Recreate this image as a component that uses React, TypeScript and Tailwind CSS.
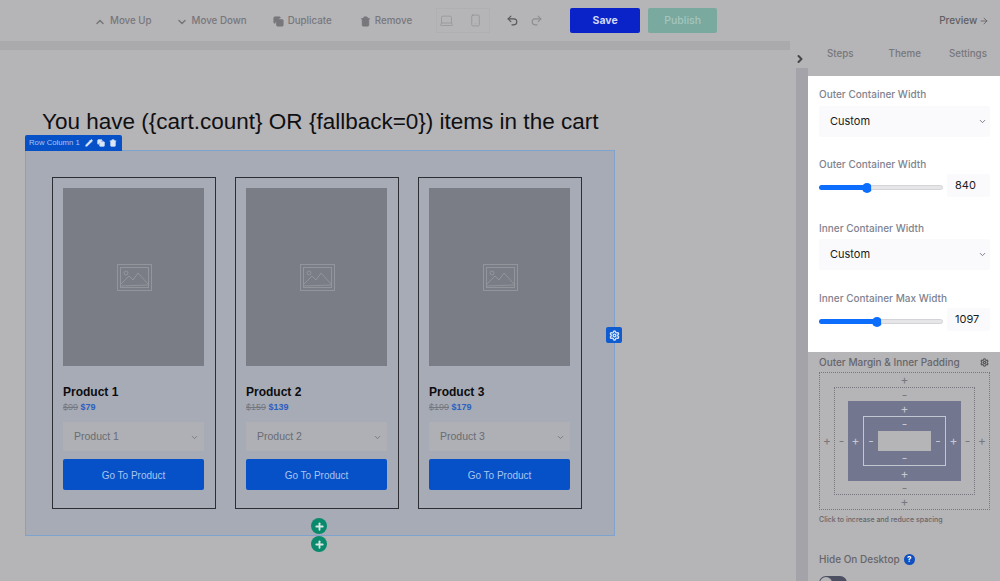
import type { ReactNode } from "react";
import { ArrowRight, ChevronDown, ChevronRight, ChevronUp, Copy, Laptop, Pencil, Plus, Redo2, Settings, Smartphone, Trash2, Undo2 } from "lucide-react";

const products = [
    { name: "Product 1", was: "$99", now: "$79" },
    { name: "Product 2", was: "$159", now: "$139" },
    { name: "Product 3", was: "$199", now: "$179" },
];

const ToolButton = ({ icon, label, className }: { icon: ReactNode; label: string; className: string }) => (
    <div className={`flex items-center gap-[4px] whitespace-nowrap pt-[2px] text-[9.75px] font-medium text-[#77777c] ${className}`}>
        {icon}
        <span>{label}</span>
    </div>
);

const PlaceholderIcon = () => (
    <svg width="35" height="27" viewBox="0 0 35 27" fill="none" stroke="#92959c" strokeWidth="1">
        <rect x="0.5" y="0.5" width="34" height="26" />
        <rect x="3.5" y="3.5" width="28" height="20" />
        <circle cx="9" cy="9" r="2" />
        <path d="M4 20 L12 12 L16 16 L21 9 L31 20" />
        <path d="M4 22 L31 21" />
    </svg>
);

const ProductCard = ({ name, was, now }: { name: string; was: string; now: string }) => (
    <div className="w-[164px] h-[332px] border border-[#2c2e33] pl-[10px] pr-[11px] pt-[10px]">
        <div className="h-[178px] bg-[#7a7d85] flex items-center justify-center pl-[2px]">
            <PlaceholderIcon />
        </div>
        <div className="mt-[19px] text-[12px] leading-[14px] font-bold text-[#0c0c10]">{name}</div>
        <div className="mt-[2px] text-[9px] leading-[12px]">
            <span className="line-through text-[#75787f]">{was}</span>{" "}
            <span className="font-bold text-[#2b5fc0]">{now}</span>
        </div>
        <div className="mt-[9px] h-[29px] bg-[#aeb0b6] flex items-center justify-between pl-[11px] pr-[5px] pt-[1px] text-[10.5px] text-[#6a6c72]">
            <span>{name}</span>
            <ChevronDown size={9} />
        </div>
        <div className="mt-[8px] h-[31px] bg-[#0650c8] rounded-[2px] flex items-center justify-center pt-[1px] text-[10px] text-[#a9c6ef]">
            Go To Product
        </div>
    </div>
);

const FieldLabel = ({ children }: { children: ReactNode }) => (
    <div className="text-[10px] leading-[14px] font-medium text-[#7f838e]">{children}</div>
);

const SelectField = () => (
    <div className="mt-[4px] h-[31px] bg-[#fafafd] rounded-[2px] flex items-center justify-between pl-[11px] pr-[3px] text-[11px] text-[#1b1c20]">
        <span>Custom</span>
        <ChevronDown size={9} className="text-[#555860]" />
    </div>
);

const SliderField = ({ fill, rest, value }: { fill: string; rest: string; value: string }) => (
    <div className="mt-[3px] flex items-center justify-between">
        <div className="flex items-center w-[124px] pt-[4px]">
            <div className={`h-[5px] bg-[#0d6efd] rounded-l-full ${fill}`} />
            <div className="w-[10px] h-[10px] rounded-full bg-[#0d6efd] shrink-0 -mx-[1px]" />
            <div className={`h-[5px] bg-[#e6e6e8] border border-[#d4d4d8] rounded-r-full ${rest}`} />
        </div>
        <div className="w-[43px] h-[23px] bg-[#fafafd] rounded-[2px] flex items-center pl-[8px] text-[11px] text-[#1b1c20]">{value}</div>
    </div>
);

// one ring of the spacing box: sign in the middle of each side
const SpacingRing = ({ sign, className, signClass, children }: { sign: string; className: string; signClass: string; children: ReactNode }) => (
    <div className={`grid text-[12px] leading-none ${className}`}>
        <div className={`col-start-2 flex items-center justify-center ${signClass}`}>{sign}</div>
        <div className={`col-start-1 row-start-2 flex items-center justify-center ${signClass}`}>{sign}</div>
        <div className="col-start-2 row-start-2 min-h-0">{children}</div>
        <div className={`col-start-3 row-start-2 flex items-center justify-center ${signClass}`}>{sign}</div>
        <div className={`col-start-2 row-start-3 flex items-center justify-center ${signClass}`}>{sign}</div>
    </div>
);

export default function App() {
    return (
        <div className="relative w-[1000px] h-[581px] overflow-hidden bg-[#b5b4b6] font-['Inter',sans-serif] flex flex-col">
            {/* Top toolbar */}
            <div className="h-[41px] shrink-0 flex items-center">
                <ToolButton className="ml-[94px]" label="Move Up" icon={<ChevronUp size={12} strokeWidth={3} />} />
                <ToolButton className="ml-[24px]" label="Move Down" icon={<ChevronDown size={12} strokeWidth={3} />} />
                <ToolButton className="ml-[26px]" label="Duplicate" icon={<Copy size={11} strokeWidth={2} fill="currentColor" />} />
                <ToolButton className="ml-[28px]" label="Remove" icon={<Trash2 size={11} strokeWidth={2} fill="currentColor" />} />
                <div className="ml-[24px] w-[54px] h-[25px] border border-[#b0afb1] flex items-center pl-[2px] gap-[15px] text-[#8d8d92]">
                    <Laptop size={15} strokeWidth={1} />
                    <Smartphone size={13} strokeWidth={1.2} />
                </div>
                <div className="ml-[16px] flex items-center gap-[11px]">
                    <Undo2 size={13} className="text-[#55555a]" />
                    <Redo2 size={13} className="text-[#8d8d92]" />
                </div>
                <div className="ml-[27px] w-[70px] h-[25px] bg-[#0a23c9] rounded-[2px] flex items-center justify-center text-[10.5px] font-bold text-[#d3d8f4]">Save</div>
                <div className="ml-[8px] w-[69px] h-[25px] bg-[#79a99f] rounded-[2px] flex items-center justify-center text-[10.5px] font-medium text-[#a5c5be]">Publish</div>
                <div className="ml-[222px] flex items-center gap-[2px] whitespace-nowrap text-[10px] font-medium text-[#5f5f64]">
                    <span>Preview</span>
                    <ArrowRight size={10} />
                </div>
            </div>
            <div className="flex-1 flex min-h-0">
                {/* Canvas */}
                <div className="w-[796px] shrink-0">
                    <div className="w-[790px] h-[9px] bg-[#aaa9ab]" />
                    <div className="pt-[58px] pl-[42px] font-['Liberation_Sans',sans-serif] text-[22.5px] leading-[28px] text-[#0f0f12]">
                        You have ({"{cart.count}"} OR {"{fallback=0}"}) items in the cart
                    </div>
                    <div className="relative ml-[25px] mt-[14px] w-[590px] h-[386px] border border-[#7fa3cf] bg-[#a6abb6] pl-[26px] pt-[26px] flex gap-[19px] font-['Liberation_Sans',sans-serif]">
                        <div className="absolute left-[-1px] top-[-16px] w-[97px] h-[16px] bg-[#0650c8] rounded-t-[2px] flex items-center pl-[4px] gap-[4px] text-[7.75px] text-[#a9c6ef]">
                            <span className="mr-[1px]">Row Column 1</span>
                            <Pencil size={8} fill="currentColor" className="text-[#dbe6f6]" />
                            <Copy size={8} fill="currentColor" className="text-[#dbe6f6]" />
                            <Trash2 size={8} fill="currentColor" className="text-[#dbe6f6]" />
                        </div>
                        {products.map(product => (
                            <ProductCard key={product.name} {...product} />
                        ))}
                        <div className="absolute left-[580px] top-[176px] w-[16px] h-[16px] bg-[#0f5cd0] rounded-[2px] flex items-center justify-center">
                            <Settings size={11} strokeWidth={3} className="text-[#dbe6f6]" />
                        </div>
                        <div className="absolute left-[285px] top-[367px] w-[16px] h-[16px] rounded-full bg-[#0a8a6c] flex items-center justify-center">
                            <Plus size={11} strokeWidth={4} className="text-[#d6e8e3]" />
                        </div>
                        <div className="absolute left-[285px] top-[385px] w-[16px] h-[16px] rounded-full bg-[#0a8a6c] flex items-center justify-center">
                            <Plus size={11} strokeWidth={4} className="text-[#d6e8e3]" />
                        </div>
                    </div>
                </div>
                {/* Sidebar */}
                <div className="flex-1 flex flex-col">
                    <div className="absolute left-[794px] top-[53px]">
                        <ChevronRight size={12} strokeWidth={4} className="text-[#45454a]" />
                    </div>
                    <div className="h-[35px] shrink-0 flex items-center pb-[9px] whitespace-nowrap text-[9.75px] font-medium text-[#77777c]">
                        <span className="ml-[31px]">Steps</span>
                        <span className="ml-[35px]">Theme</span>
                        <span className="ml-[28px]">Settings</span>
                    </div>
                    <div className="flex-1 flex min-h-0">
                        <div className="w-[12px] shrink-0 mt-[-8px] bg-[#a3a3a9]" />
                        <div className="flex-1 min-w-0">
                            {/* Highlighted width settings */}
                            <div className="h-[276px] bg-white pl-[11px] pr-[10px] pt-[11px]">
                                <FieldLabel>Outer Container Width</FieldLabel>
                                <div className="h-[1px]" />
                                <SelectField />
                                <div className="mt-[20px]"><FieldLabel>Outer Container Width</FieldLabel></div>
                                <SliderField fill="w-[44px]" rest="flex-1" value="840" />
                                <div className="mt-[24px]"><FieldLabel>Inner Container Width</FieldLabel></div>
                                <SelectField />
                                <div className="mt-[21px]"><FieldLabel>Inner Container Max Width</FieldLabel></div>
                                <SliderField fill="w-[54px]" rest="flex-1" value="1097" />
                            </div>
                            <div className="pl-[11px] pr-[10px]">
                                <div className="mt-[3px] h-[14px] flex items-center justify-between pr-[1px] text-[10px] font-medium text-[#66666c]">
                                    <span>Outer Margin &amp; Inner Padding</span>
                                    <Settings size={9} strokeWidth={3} className="text-[#55555a]" />
                                </div>
                                <div className="mt-[3px] h-[138px]">
                                    <SpacingRing sign="+" signClass="text-[#77777d]" className="grid-cols-[14px_1fr_14px] grid-rows-[14px_1fr_14px] h-full border border-dotted border-[#77777d]">
                                        <SpacingRing sign="-" signClass="text-[#77777d]" className="grid-cols-[13px_1fr_13px] grid-rows-[13px_1fr_13px] h-full border border-dotted border-[#77777d]">
                                            <SpacingRing sign="+" signClass="text-[#c6c9d2]" className="grid-cols-[15px_1fr_15px] grid-rows-[15px_1fr_15px] h-full bg-[#72778f]">
                                                <SpacingRing sign="-" signClass="text-[#c6c9d2]" className="grid-cols-[14px_1fr_14px] grid-rows-[14px_1fr_14px] h-full border border-[#c3c7d2]">
                                                    <div className="h-full bg-[#b5b4b6]" />
                                                </SpacingRing>
                                            </SpacingRing>
                                        </SpacingRing>
                                    </SpacingRing>
                                </div>
                                <div className="mt-[5px] text-[7px] leading-[10px] font-medium text-[#66666c]">Click to increase and reduce spacing</div>
                                <div className="mt-[27px] flex items-center gap-[4px] text-[10px] leading-[14px] font-medium text-[#66666c]">
                                    <span>Hide On Desktop</span>
                                    <div className="w-[11px] h-[11px] rounded-full bg-[#0f4fc0] flex items-center justify-center text-[8px] font-bold text-white">?</div>
                                </div>
                                <div className="mt-[10px] w-[28px] h-[14px] rounded-full bg-[#4c5062] flex items-center pl-[1px]">
                                    <div className="w-[12px] h-[12px] rounded-full bg-[#b5b4b6]" />
                                </div>
                            </div>
                        </div>
                    </div>
                </div>
            </div>
        </div>
    );
}
